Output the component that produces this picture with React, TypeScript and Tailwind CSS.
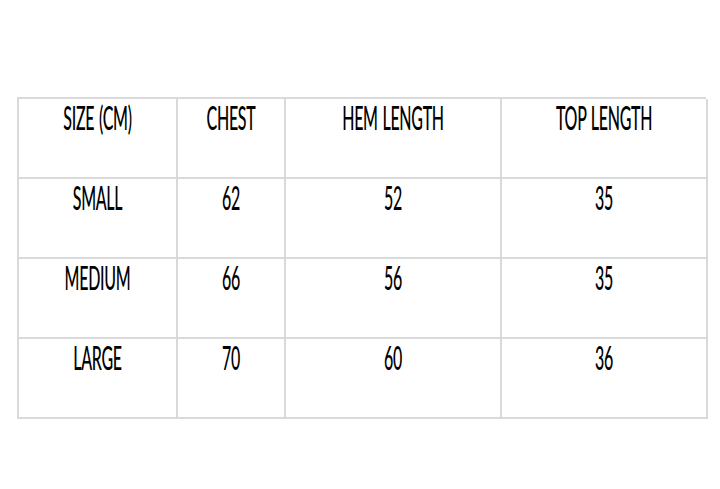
import React from "react";

const rows = [
  ["SIZE (CM)", "CHEST", "HEM LENGTH", "TOP LENGTH"],
  ["SMALL", "62", "52", "35"],
  ["MEDIUM", "66", "56", "35"],
  ["LARGE", "70", "60", "36"],
];

export default function App() {
  return (
    <div className="w-[720px] h-[489px] bg-white pl-[17px] pt-[97px]" style={{ fontFamily: "Lato, 'Liberation Sans', sans-serif" }}>
      <div className="grid grid-cols-[159px_108px_216px_206px] w-[689px] border-l-2 border-t-2 border-[#d9d9d9]">
        {rows.map((r, i) =>
          r.map((c, j) => (
            <div
              key={`${i}-${j}`}
              className="h-[80px] border-r-2 border-b-2 border-[#d9d9d9] flex justify-center items-start pt-[2px]"
            >
              <span className="inline-block origin-top scale-y-[2.1] text-[16px] font-medium leading-none text-black tracking-[-0.3px] [word-spacing:1px]">
                {c}
              </span>
            </div>
          ))
        )}
      </div>
    </div>
  );
}
